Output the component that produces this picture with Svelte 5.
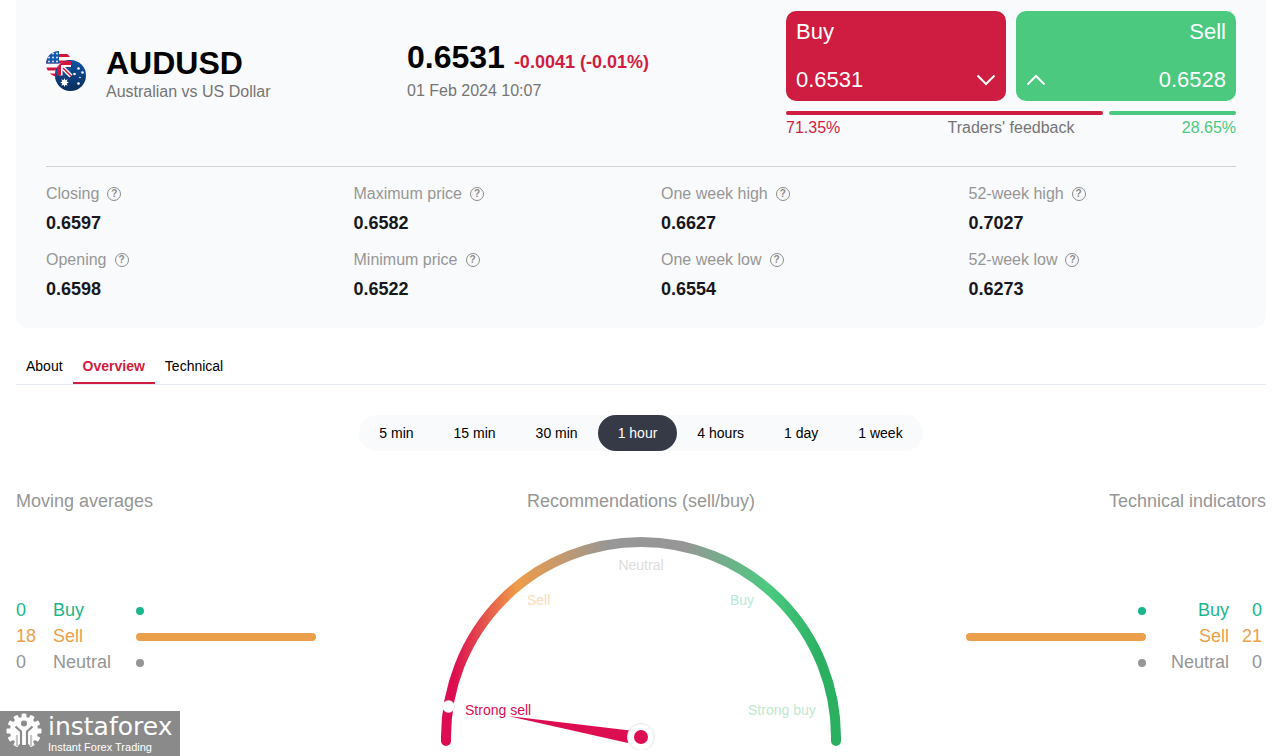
<script>
    let period = $state('1 hour');
    let tab = $state('Overview');

    const tabs = ['About', 'Overview', 'Technical'];
    const periods = ['5 min', '15 min', '30 min', '1 hour', '4 hours', '1 day', '1 week'];

    const stats = [
        {label: 'Closing', value: '0.6597'},
        {label: 'Maximum price', value: '0.6582'},
        {label: 'One week high', value: '0.6627'},
        {label: '52-week high', value: '0.7027'},
        {label: 'Opening', value: '0.6598'},
        {label: 'Minimum price', value: '0.6522'},
        {label: 'One week low', value: '0.6554'},
        {label: '52-week low', value: '0.6273'}
    ];

    const averages = [
        {name: 'Buy', count: 0},
        {name: 'Sell', count: 18},
        {name: 'Neutral', count: 0}
    ];
    const indicators = [
        {name: 'Buy', count: 0},
        {name: 'Sell', count: 21},
        {name: 'Neutral', count: 0}
    ];

    const feedback = {buy: 71.35, sell: 28.65};

    // teeth of the brand gear, in degrees; the bottom one is left out
    const teeth = [30, 60, 90, 120, 150, 210, 240, 270, 300, 330, 0];

    function barWidth(row, rows) {
        const max = Math.max(...rows.map((r) => r.count));
        return row.count ? (row.count / max) * 100 + '%' : '8px';
    }
</script>

<div class="page">
    <section class="card">
        <header>
            <div class="pair">
                <svg class="flags" width="40" height="40" viewBox="0 0 40 40" aria-hidden="true">
                    <defs>
                        <clipPath id="us"><circle cx="13" cy="13" r="13" /></clipPath>
                        <clipPath id="au"><circle cx="24.5" cy="24.5" r="15.5" /></clipPath>
                        <linearGradient id="navy" x1="0" y1="0" x2="0" y2="1">
                            <stop offset="0" stop-color="#0d55a4" />
                            <stop offset="1" stop-color="#0a2c5c" />
                        </linearGradient>
                    </defs>
                    <g clip-path="url(#us)">
                        <rect width="28" height="28" fill="#fff" />
                        <path d="M0 4.5h28M0 11h28M0 18h28M0 24h28" stroke="#d4143c" stroke-width="3" />
                        <rect width="13" height="12.5" fill="#1558ad" />
                        <g fill="#dfe9f7">
                            <circle cx="7" cy="2.5" r="1" /><circle cx="11" cy="2.5" r="1" />
                            <circle cx="3" cy="6.5" r="1" /><circle cx="7" cy="6.5" r="1" /><circle cx="11" cy="6.5" r="1" />
                            <circle cx="3" cy="10.5" r="1" /><circle cx="7" cy="10.5" r="1" /><circle cx="11" cy="10.5" r="1" />
                        </g>
                    </g>
                    <g clip-path="url(#au)">
                        <rect x="9" y="9" width="31" height="31" fill="url(#navy)" />
                        <path d="M9 9h16v15.500H9z" fill="#1b4d94" />
                        <path d="M14 14l11 11" stroke="#fff" stroke-width="4" />
                        <path d="M9 14.500h16M15 9v15.500" stroke="#fff" stroke-width="3" />
                        <path d="M17 17l8 8" stroke="#d4143c" stroke-width="1.6" />
                        <path d="M9 12h16M13 9v15.500" stroke="#d4143c" stroke-width="4" />
                        <path d="M18.5 27l.9 2.2 2.2-.9-.9 2.2 2.1 1-2.1 1 .9 2.2-2.2-.9-.9 2.2-.9-2.2-2.2.9.9-2.200-2.1-1 2.1-1-.9-2.200 2.200.9z" fill="#fff" />
                        <g fill="#fff">
                            <circle cx="32.5" cy="17.5" r="1.3" /><circle cx="28.5" cy="23" r="1.3" />
                            <circle cx="36.5" cy="21.5" r="1.3" /><circle cx="34" cy="26.5" r=".8" />
                            <circle cx="32.5" cy="32.5" r="1.3" />
                        </g>
                    </g>
                </svg>
                <div>
                    <h1>AUDUSD</h1>
                    <p class="muted">Australian vs US Dollar</p>
                </div>
            </div>

            <div class="price">
                <div><strong>0.6531</strong><span class="change">-0.0041 (-0.01%)</span></div>
                <p class="muted">01 Feb 2024 10:07</p>
            </div>

            <div class="trade">
                <div class="buttons">
                    <button class="buy">
                        <span>Buy</span>
                        <span class="row">0.6531
                            <svg width="20" height="12" viewBox="0 0 20 12"><path d="M1.5 1.5l8.5 8.5 8.5-8.5" /></svg>
                        </span>
                    </button>
                    <button class="sell">
                        <span>Sell</span>
                        <span class="row">
                            <svg width="20" height="12" viewBox="0 0 20 12"><path d="M1.5 10.5L10 2l8.5 8.5" /></svg>
                            0.6528</span>
                    </button>
                </div>
                <div class="split">
                    <i class="red" style:flex-grow={feedback.buy}></i>
                    <i class="green" style:flex-grow={feedback.sell}></i>
                </div>
                <div class="feedback">
                    <span class="down">{feedback.buy}%</span>
                    <span>Traders' feedback</span>
                    <span class="up">{feedback.sell}%</span>
                </div>
            </div>
        </header>

        <dl class="stats">
            {#each stats as stat}
                <div>
                    <dt>{stat.label} <button class="help" aria-label="About {stat.label}">?</button></dt>
                    <dd>{stat.value}</dd>
                </div>
            {/each}
        </dl>
    </section>

    <nav class="tabs">
        {#each tabs as t}
            <button class:active={tab == t} onclick={() => tab = t}>{t}</button>
        {/each}
    </nav>

    <div class="periods">
        {#each periods as p}
            <button class:active={period == p} onclick={() => period = p}>{p}</button>
        {/each}
    </div>

    <div class="overview">
        <section>
            <h2>Moving averages</h2>
            <table>
                <tbody>
                    {#each averages as row}
                        <tr class={row.name.toLowerCase()}>
                            <td class="count">{row.count}</td>
                            <th scope="row">{row.name}</th>
                            <td class="track"><div class="bar" style:width={barWidth(row, averages)}></div></td>
                        </tr>
                    {/each}
                </tbody>
            </table>
        </section>

        <section class="center">
            <h2>Recommendations (sell/buy)</h2>
            <svg class="gauge" width="400" height="215" viewBox="0 0 400 215">
                <defs>
                    <linearGradient id="scale" gradientUnits="userSpaceOnUse" x1="0" y1="0" x2="400" y2="0">
                        <stop offset="0.03" stop-color="#dc0d50" />
                        <stop offset="0.19" stop-color="#ee9c49" />
                        <stop offset="0.42" stop-color="#969696" />
                        <stop offset="0.61" stop-color="#969696" />
                        <stop offset="0.82" stop-color="#4aca7f" />
                        <stop offset="0.95" stop-color="#2bb062" />
                    </linearGradient>
                </defs>
                <path d="M5 206V202A195 195 0 0 1 395 202V206" fill="none" stroke="url(#scale)" stroke-width="10" stroke-linecap="round" />
                <circle cx="7.5" cy="171.5" r="6" fill="#fff" stroke="#e6e6e6" stroke-width=".6" />
                <g font-size="14">
                    <text x="24" y="180" fill="#dc0d50">Strong sell</text>
                    <text x="86" y="70" fill="#fbdcbb">Sell</text>
                    <text x="200" y="35" fill="#dcdcdc" text-anchor="middle">Neutral</text>
                    <text x="289" y="70" fill="#b5ead9">Buy</text>
                    <text x="307" y="180" fill="#bfe9cf">Strong buy</text>
                </g>
                <path d="M67 181L189 195.5L187 208z" fill="#dc0d50" />
                <circle cx="200" cy="202" r="13.5" fill="#fff" stroke="#e9e9e9" />
                <circle cx="200" cy="202" r="7" fill="#dc0d50" />
            </svg>
        </section>

        <section class="right">
            <h2>Technical indicators</h2>
            <table>
                <tbody>
                    {#each indicators as row}
                        <tr class={row.name.toLowerCase()}>
                            <td class="track"><div class="bar" style:width={barWidth(row, indicators)}></div></td>
                            <th scope="row">{row.name}</th>
                            <td class="count">{row.count}</td>
                        </tr>
                    {/each}
                </tbody>
            </table>
        </section>
    </div>

    <div class="brand">
        <svg width="36" height="36" viewBox="0 0 36 36" aria-hidden="true">
            <g fill="#fff">
                {#each teeth as angle}
                    <rect x="15.6" y="0.5" width="4.8" height="6" rx="1" transform="rotate({angle} 18 18)" />
                {/each}
                <circle cx="18" cy="18" r="14" />
            </g>
            <circle cx="18" cy="10.5" r="3" fill="#8a8a8a" />
            <path d="M9.500 13.500l5.500 5V33M26.500 13.500l-5.500 5V33" fill="none" stroke="#8a8a8a" stroke-width="2.200" />
            <path d="M11 22v11M25 22v11" stroke="#8a8a8a" stroke-width="1" />
        </svg>
        <div>
            <div class="brand-name">instaforex</div>
            <div class="brand-sub">Instant Forex Trading</div>
        </div>
    </div>
</div>

<style>
:global(body) {
    margin: 0;
    background: #fff;
}

.page {
    position: relative;
    box-sizing: border-box;
    min-height: 100vh;
    padding: 0 13px 0 16px;
    font-family: "Liberation Sans", Arial, sans-serif;
    font-size: 16px;
    line-height: 20px;
    color: #000;
}

button {
    border: 0;
    background: none;
    padding: 0;
    font: inherit;
    color: inherit;
    cursor: pointer;
}

h1, h2, p, dl, dd {
    margin: 0;
}

.card {
    padding: 0 30px 27px;
    background: #f9fafc;
    border-radius: 0 0 12px 12px;
}

header {
    display: grid;
    grid-template-columns: 361px 1fr 450px;
    padding: 11px 0 25px;
    border-bottom: 1px solid #cfd1d6;
}

.pair {
    display: flex;
    gap: 20px;
    padding-top: 34px;
}

.flags {
    margin-top: 6px;
}

h1, .price strong {
    font-size: 32px;
    line-height: 36px;
    font-weight: bold;
}

.muted {
    line-height: 22px;
    color: #757575;
}

.price {
    padding-top: 28px;
}

.price p {
    margin-top: 5px;
}

.change {
    margin-left: 9px;
    font-size: 18px;
    font-weight: bold;
    color: #d01d41;
}

.buttons {
    display: grid;
    grid-template-columns: 1fr 1fr;
    gap: 10px;
}

.buttons button {
    display: flex;
    flex-direction: column;
    align-items: flex-start;
    justify-content: space-between;
    height: 90px;
    padding: 7px 10px;
    border-radius: 10px;
    font-size: 22px;
    line-height: 28px;
    color: #fff;
}

.buttons .buy {
    background: #ce1d40;
}

.buttons .sell {
    background: #4ac97f;
    align-items: flex-end;
}

.row {
    display: flex;
    align-items: center;
    justify-content: space-between;
    width: 100%;
}

.row svg {
    fill: none;
    stroke: #fff;
    stroke-width: 2;
}

.split {
    display: flex;
    gap: 6px;
    margin-top: 10px;
}

.split i {
    height: 4px;
    border-radius: 2px;
}

.red {
    background: #ce1d40;
}

.green {
    background: #4ac97f;
}

.feedback {
    display: flex;
    justify-content: space-between;
    line-height: 26px;
    color: #757575;
}

.down {
    color: #d01d41;
}

.up {
    color: #4ac97f;
}

.stats {
    display: grid;
    grid-template-columns: repeat(4, 1fr);
    gap: 15px 40px;
    padding-top: 17px;
}

.stats dt {
    display: flex;
    align-items: center;
    gap: 8px;
    color: #969696;
}

.stats dd {
    margin-top: 7px;
    font-size: 18px;
    line-height: 24px;
    font-weight: bold;
    color: #16181d;
}

.help {
    box-sizing: border-box;
    width: 14px;
    height: 14px;
    border: 1px solid #8c8c8c;
    border-radius: 50%;
    font-size: 10px;
    line-height: 12px;
    font-weight: bold;
    color: #8c8c8c;
}

.tabs {
    display: flex;
    margin-top: 18px;
    border-bottom: 1px solid #e6ebf3;
    font-size: 14px;
}

.tabs button {
    padding: 10px 10px 6px;
    border-bottom: 2px solid transparent;
}

.tabs .active {
    font-weight: bold;
    color: #d01d41;
    border-color: #d01d41;
}

.periods {
    display: flex;
    width: fit-content;
    margin: 30px auto 0;
    border-radius: 18px;
    background: #f9fafc;
    font-size: 14px;
}

.periods button {
    height: 36px;
    padding: 0 20px;
    border-radius: 18px;
}

.periods .active {
    background: #363946;
    color: #fff;
}

.overview {
    display: grid;
    grid-template-columns: 1fr 400px 1fr;
    margin-top: 38px;
}

h2 {
    font-size: 18px;
    line-height: 24px;
    font-weight: normal;
    color: #969696;
}

.center {
    text-align: center;
}

.gauge {
    display: block;
    margin-top: 22px;
    text-align: left;
}

table {
    margin-top: 84px;
    border-collapse: collapse;
    font-size: 18px;
    line-height: 26px;
}

td, th {
    padding: 0;
    font-weight: normal;
    text-align: left;
}

.count {
    width: 37px;
}

th {
    width: 83px;
}

.track {
    width: 180px;
    padding-top: 2px;
}

.bar {
    height: 8px;
    border-radius: 4px;
    background: currentColor;
}

.buy {
    color: #1ab58c;
}

.sell {
    color: #ec9f4b;
}

.neutral {
    color: #969696;
}

.right, .right td, .right th {
    text-align: right;
}

.right table {
    margin-left: auto;
}

.right .count {
    width: 33px;
    padding-right: 4px;
}

.right .bar {
    margin-left: auto;
}

.brand {
    position: absolute;
    left: 0;
    bottom: 0;
    display: flex;
    gap: 6px;
    box-sizing: border-box;
    width: 180px;
    height: 45px;
    padding: 2px 6px;
    background: #8a8a8a;
    color: #fff;
}

.brand-name {
    font-family: "DejaVu Sans", sans-serif;
    font-size: 25px;
    line-height: 28px;
}

.brand-sub {
    font-size: 11px;
    line-height: 12px;
}
</style>
